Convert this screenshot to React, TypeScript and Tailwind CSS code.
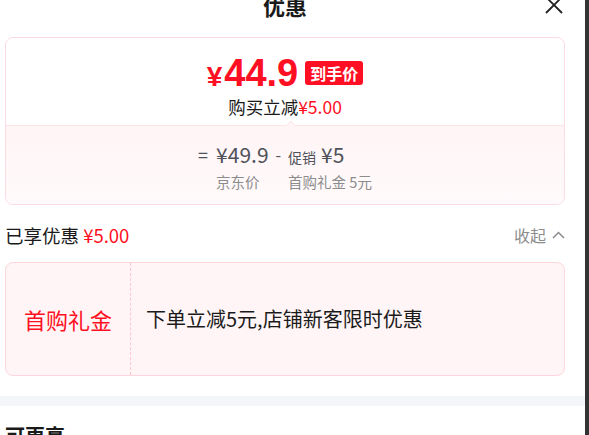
export default function App() {
  return (
    <div className="w-[589px] h-[435px] overflow-hidden flex bg-white font-['Noto_Sans_CJK_SC',sans-serif] text-[#1a1a1a]">
      <div className="w-[585px] h-full flex flex-col">
        {/* header */}
        <div className="relative mx-[5px] w-[560px] h-[37px] shrink-0 flex justify-center">
          <div className="-mt-[6px] text-[22px] leading-[22px] font-bold">优惠</div>
          <svg className="absolute left-[540px] -top-[4px]" width="18" height="18" viewBox="0 0 18 18">
            <path d="M1 1L17 17M17 1L1 17" stroke="#222" strokeWidth="1.8" fill="none" />
          </svg>
        </div>

        {/* card 1 */}
        <div className="mx-[5px] w-[560px] shrink-0 border border-[#fddbe2] rounded-[8px] overflow-hidden">
          <div className="pt-[15px] pb-[7px] flex flex-col items-center">
            <div className="h-[40px] flex items-center">
              <span className="flex items-baseline text-[#ff0f23] font-bold font-['Liberation_Sans',sans-serif]">
                <span className="text-[28px] leading-none">¥</span>
                <span className="text-[38px] leading-none ml-[2px]">44.9</span>
              </span>
              <span className="ml-[7px] h-[24px] px-[5px] rounded-[3px] bg-[#ff0f23] text-white text-[16px] font-bold leading-[24px]">
                到手价
              </span>
            </div>
            <div className="mt-[3px] text-[17.5px] leading-[22px]">
              购买立减<span className="text-[#ff0f23]">¥5.00</span>
            </div>
          </div>
          <div className="relative border-t border-[#fde4e9] bg-gradient-to-b from-[#fff4f6] to-[#fffafb] pt-[16px] pb-[13px] flex justify-center">
            <svg className="absolute left-[280px] -top-[5px]" width="10" height="5" viewBox="0 0 10 5">
              <path d="M0 5L5 0L10 5Z" fill="#fff4f6" />
              <path d="M0 5L5 0L10 5" stroke="#fde4e9" strokeWidth="1" fill="none" />
            </svg>
            <div className="flex items-start text-[#505259]">
              <span className="text-[18px] leading-[24px] mr-[8px]">=</span>
              <div className="flex flex-col">
                <span className="text-[21px] leading-[24px]">¥49.9</span>
                <span className="mt-[7px] text-[14.5px] leading-[18px] text-[#8c8c8c]">京东价</span>
              </div>
              <span className="mx-[7px] text-[16px] leading-[24px]">-</span>
              <div className="flex flex-col">
                <span className="h-[24px] flex items-baseline">
                  <span className="text-[14px] leading-[24px]">促销</span>
                  <span className="text-[21px] leading-[24px] ml-[5px]">¥5</span>
                </span>
                <span className="mt-[7px] text-[14.5px] leading-[18px] text-[#8c8c8c]">首购礼金 5元</span>
              </div>
            </div>
          </div>
        </div>

        {/* savings row */}
        <div className="mt-[17px] mx-[5px] w-[560px] h-[26px] shrink-0 flex items-center justify-between">
          <div className="text-[18.5px] leading-[26px]">
            已享优惠 <span className="text-[#ff0f23]">¥5.00</span>
          </div>
          <div className="flex items-center text-[16px] leading-[26px] text-[#8c8c8c]">
            收起
            <svg className="ml-[6px]" width="13" height="8" viewBox="0 0 13 8">
              <path d="M1 7L6.5 1.5L12 7" stroke="#8c8c8c" strokeWidth="1.5" fill="none" />
            </svg>
          </div>
        </div>

        {/* coupon card */}
        <div className="mt-[14px] mx-[5px] w-[560px] h-[114px] shrink-0 flex border border-[#fdd6de] rounded-[8px] bg-[#fff5f6] overflow-hidden">
          <div className="w-[125px] h-full flex items-center justify-center border-r border-dashed border-[#fcc6d2] text-[#ff0f23] text-[22px]">
            首购礼金
          </div>
          <div className="flex-1 flex items-center pl-[15px] text-[20px]">下单立减5元,店铺新客限时优惠</div>
        </div>

        {/* band */}
        <div className="mt-[20px] h-[10px] shrink-0 bg-[#f5f6fa]" />

        <div className="mt-[16px] px-[5px] text-[20px] leading-[28px] font-bold">可更享</div>
      </div>
      <div className="w-[4px] h-full bg-[#333]" />
    </div>
  );
}
